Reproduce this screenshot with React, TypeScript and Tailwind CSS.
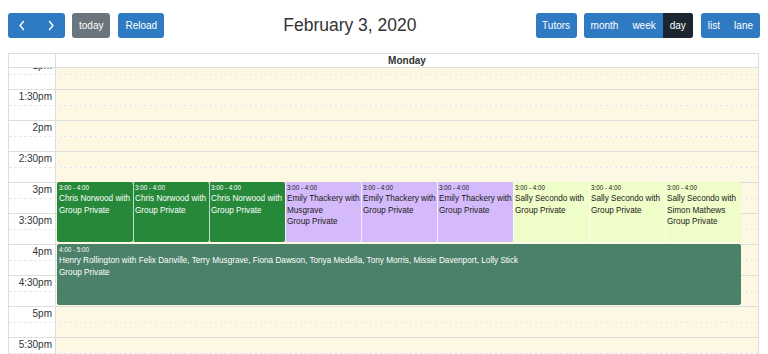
import React from "react";

const Chev = ({ dir }: { dir: "l" | "r" }) => (
  <svg width="8" height="11" viewBox="0 0 8 11" fill="none" stroke="white" strokeWidth="1.4" strokeLinecap="round" strokeLinejoin="round">
    {dir === "l" ? <path d="M5.5 1.5 L2 5.5 L5.5 9.5" /> : <path d="M2.5 1.5 L6 5.5 L2.5 9.5" />}
  </svg>
);

type Ev = { color: string; lines: string[] };

const GREEN = "bg-[#26893a] border-[#26893a] text-white";
const PURPLE = "bg-[#d4bafa] border-[#d4bafa] text-[#1b1b1b]";
const LIME = "bg-[#effdc8] border-[#effdc8] text-[#1b1b1b]";

const events: Ev[] = [
  { color: GREEN, lines: ["Chris Norwood with", "Group Private"] },
  { color: GREEN, lines: ["Chris Norwood with", "Group Private"] },
  { color: GREEN, lines: ["Chris Norwood with", "Group Private"] },
  { color: PURPLE, lines: ["Emily Thackery with", "Musgrave", "Group Private"] },
  { color: PURPLE, lines: ["Emily Thackery with", "Group Private"] },
  { color: PURPLE, lines: ["Emily Thackery with", "Group Private"] },
  { color: LIME, lines: ["Sally Secondo with", "Group Private"] },
  { color: LIME, lines: ["Sally Secondo with", "Group Private"] },
  { color: LIME, lines: ["Sally Secondo with", "Simon Mathews", "Group Private"] },
];

const rows: { label: string; major: boolean }[] = [];
["1", "2", "3", "4", "5", "6"].forEach((h) => {
  rows.push({ label: `${h}pm`, major: true });
  rows.push({ label: "", major: false });
  rows.push({ label: `${h}:30pm`, major: true });
  rows.push({ label: "", major: false });
});

export default function App() {
  const btn = "h-[25px] px-[7px] text-[10px] text-white flex items-center justify-center";
  return (
    <div className="w-[768px] h-[354px] overflow-hidden bg-white" style={{ fontFamily: '"Liberation Sans", Arial, sans-serif' }}>
      <div className="flex items-center justify-between pl-2 pr-2 pt-[13px] h-[38px]">
        <div className="flex items-center">
          <div className="flex rounded-[3px] overflow-hidden bg-[#2f7bc3]">
            <div className="w-[28.5px] h-[25px] flex items-center justify-center"><Chev dir="l" /></div>
            <div className="w-[28.5px] h-[25px] flex items-center justify-center"><Chev dir="r" /></div>
          </div>
          <div className={`${btn} ml-[7px] rounded-[3px] bg-[#6c757d]`}>today</div>
          <div className={`${btn} ml-[8px] rounded-[3px] bg-[#2f7bc3]`}>Reload</div>
        </div>
        <div className="text-[17.5px] text-[#333]">February 3, 2020</div>
        <div className="flex items-center">
          <div className={`${btn} rounded-[3px] bg-[#2f7bc3] w-[41px]`}>Tutors</div>
          <div className="flex ml-[7px] rounded-[3px] overflow-hidden bg-[#2f7bc3]">
            <div className={btn}>month</div>
            <div className={btn}>week</div>
            <div className={`${btn} bg-[#1c2630]`}>day</div>
          </div>
          <div className="flex ml-[8px] rounded-[3px] overflow-hidden bg-[#2f7bc3]">
            <div className={btn}>list</div>
            <div className={btn}>lane</div>
          </div>
        </div>
      </div>

      <div className="ml-2 mt-[15px] w-[751px] border border-[#ddd]">
        <div className="flex h-[14px] border-b border-[#ddd]">
          <div className="w-[47px] border-r border-[#ddd]" />
          <div className="flex-1 text-center text-[10px] font-bold text-[#333] leading-[14px]">Monday</div>
        </div>
        <div className="relative h-[290px] overflow-hidden">
          <div className="mt-[-10px]">
            {rows.map((r, i) => (
              <div
                key={i}
                className={`flex h-[15.5px] border-t ${r.major ? "border-solid border-[#ddd]" : "border-dashed border-[#e8e8e8]"}`}
              >
                <div className="w-[47px] border-r border-solid border-[#ddd] bg-white text-right pr-[3px] text-[10px] leading-[14px] text-[#333] whitespace-nowrap">
                  {r.label}
                </div>
                <div className="flex-1 bg-[#fcf8e3]" />
              </div>
            ))}
          </div>
          <div className="absolute left-[48px] top-[114px] flex">
            {events.map((e, i) => (
              <div
                key={i}
                className={`w-[76px] h-[60px] border rounded-[2px] overflow-hidden pl-[1px] ${e.color} ${i > 0 ? "border-l-white/70" : ""}`}
              >
                <div className="text-[6.3px] leading-[10px] whitespace-nowrap">3:00 - 4:00</div>
                {e.lines.map((l, j) => (
                  <div key={j} className="text-[8.2px] leading-[11.5px] whitespace-nowrap">{l}</div>
                ))}
              </div>
            ))}
          </div>
          <div className="absolute left-[48px] top-[176px] w-[684px] h-[60.5px] rounded-[2px] bg-[#4b8069] border border-[#4b8069] text-white pl-[1px] overflow-hidden">
            <div className="text-[6.3px] leading-[10px] whitespace-nowrap">4:00 - 5:00</div>
            <div className="text-[8.2px] leading-[11.5px] whitespace-nowrap">
              Henry Rollington with Felix Danville, Terry Musgrave, Fiona Dawson, Tonya Medella, Tony Morris, Missie Davenport, Lolly Stick
            </div>
            <div className="text-[8.2px] leading-[11.5px] whitespace-nowrap">Group Private</div>
          </div>
        </div>
      </div>
    </div>
  );
}
